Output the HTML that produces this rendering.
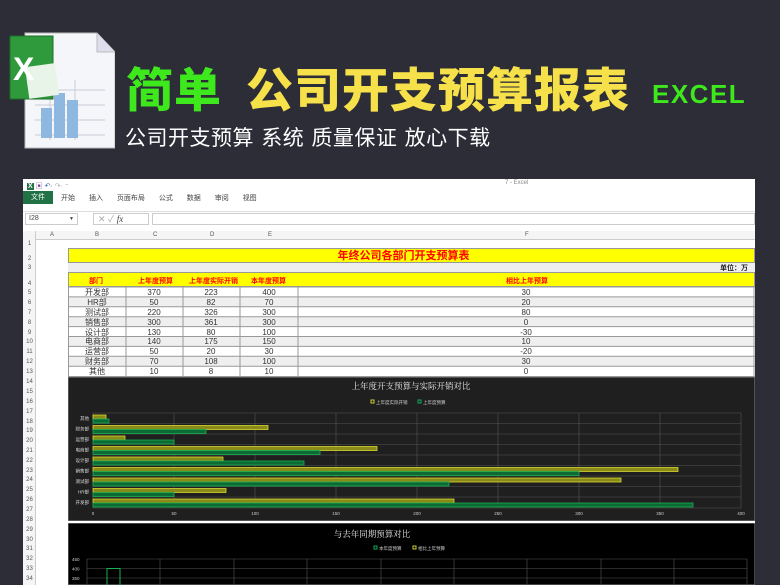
<!DOCTYPE html>
<html><head><meta charset="utf-8"><style>
*{margin:0;padding:0;box-sizing:border-box}
body{width:780px;height:585px;overflow:hidden;background:#2d2d38;font-family:"Liberation Sans","Noto Sans CJK SC",sans-serif;position:relative}
.a{position:absolute}
.t{font-family:"Noto Sans CJK SC","WenQuanYi Zen Hei",sans-serif;font-weight:900}
.rn{position:absolute;left:23px;width:13px;font-size:6px;color:#555;text-align:center}
</style></head><body>
<svg class="a" style="left:5px;top:30px" width="110" height="120" viewBox="0 0 110 120">
<path d="M20 3 H92 L110 22 V118 H20 Z" fill="#f4f6fa" stroke="#bbb"/>
<path d="M92 3 V22 H110" fill="#dde" stroke="#bbb"/>
<g stroke="#c8cdd6" stroke-width="1"><line x1="30" y1="60" x2="100" y2="60"/><line x1="30" y1="75" x2="100" y2="75"/><line x1="30" y1="90" x2="100" y2="90"/><line x1="30" y1="105" x2="100" y2="105"/><line x1="45" y1="50" x2="45" y2="110"/><line x1="70" y1="50" x2="70" y2="110"/></g>
<rect x="36" y="78" width="11" height="30" fill="#8fb8e0"/><rect x="49" y="63" width="11" height="45" fill="#8fb8e0"/><rect x="62" y="70" width="11" height="38" fill="#8fb8e0"/>
<rect x="5" y="6" width="43" height="63" fill="#2f9a3c" stroke="#1c6e28"/>
<rect x="22" y="35" width="30" height="32" fill="#e8f4e8" transform="rotate(-8 37 51)"/>
<text x="8" y="50" font-size="32" font-weight="bold" fill="#fff" font-family="Liberation Sans">X</text>
</svg>
<div class="a t" style="left:126px;top:57px;font-size:47px;color:#3de81c;line-height:60px;letter-spacing:1px">简单</div>
<div class="a t" style="left:246px;top:57px;font-size:47px;color:#f7e14a;line-height:60px;letter-spacing:1px">公司开支预算报表</div>
<div class="a" style="left:652px;top:79px;font-size:26px;font-weight:bold;color:#3de81c;line-height:30px;letter-spacing:1.5px">EXCEL</div>
<div class="a" style="left:125px;top:123px;font-size:21px;color:#fff;line-height:28px;font-family:'Noto Sans CJK SC',sans-serif;letter-spacing:0.5px;word-spacing:2px">公司开支预算 系统 质量保证 放心下载</div>

<div class="a" style="left:23px;top:179px;width:732px;height:406px;background:#fff"></div>
<div class="a" style="left:27px;top:181px;font-size:7px;color:#2f7a3a"><b style="background:#217346;color:#fff;padding:0 1px">X</b> <span style="color:#7a3ea0">▣</span> <span style="color:#2a5db0">↶</span>· <span style="color:#aaa">↷· ⁼</span></div>
<div class="a" style="left:505px;top:180px;font-size:6px;color:#888">7 - Excel</div>
<div class="a" style="left:23px;top:191px;width:30px;height:13px;background:#217346;color:#fff;font-size:7px;text-align:center;line-height:13px">文件</div>
<div class="a" style="left:61px;top:193px;font-size:7px;color:#444;word-spacing:12px">开始 插入 页面布局 公式 数据 审阅 视图</div>
<div class="a" style="left:23px;top:211px;width:732px;height:1px;background:#ddd"></div>
<div class="a" style="left:25px;top:213px;width:53px;height:12px;border:1px solid #ccc;font-size:7px;line-height:10px;padding-left:3px;color:#444">I28 <span style="float:right;margin-right:3px;font-size:5px">▼</span></div>
<div class="a" style="left:93px;top:213px;width:56px;height:12px;border:1px solid #ccc;font-size:9px;line-height:10px;color:#aaa;padding-left:4px">✕ ✓ <i style="color:#444;font-family:'Liberation Serif'">fx</i></div>
<div class="a" style="left:152px;top:213px;width:603px;height:12px;border:1px solid #ccc"></div>
<div class="a" style="left:23px;top:231px;width:732px;height:9px;background:#f5f5f5;border-bottom:1px solid #ccc"></div>
<div class="a" style="left:23px;top:231px;width:13px;height:354px;background:#f5f5f5;border-right:1px solid #ccc"></div>
<div class="a" style="top:232px;left:0;font-size:6px;color:#555;width:780px">
<span class="a" style="left:50px">A</span><span class="a" style="left:95px">B</span><span class="a" style="left:153px">C</span><span class="a" style="left:210px">D</span><span class="a" style="left:268px">E</span><span class="a" style="left:525px">F</span></div>
<div class="rn" style="top:241px">1</div><div class="rn" style="top:256px">2</div><div class="rn" style="top:265px">3</div><div class="rn" style="top:281px">4</div>
<div class="rn" style="top:290px">5</div><div class="rn" style="top:300px">6</div><div class="rn" style="top:310px">7</div><div class="rn" style="top:320px">8</div><div class="rn" style="top:330px">9</div><div class="rn" style="top:339px">10</div><div class="rn" style="top:349px">11</div><div class="rn" style="top:359px">12</div><div class="rn" style="top:369px">13</div>
<div class="rn" style="top:379px">14</div><div class="rn" style="top:389px">15</div><div class="rn" style="top:399px">16</div><div class="rn" style="top:409px">17</div><div class="rn" style="top:419px">18</div><div class="rn" style="top:428px">19</div><div class="rn" style="top:438px">20</div><div class="rn" style="top:448px">21</div><div class="rn" style="top:458px">22</div><div class="rn" style="top:468px">23</div><div class="rn" style="top:477px">24</div><div class="rn" style="top:487px">25</div><div class="rn" style="top:497px">26</div><div class="rn" style="top:507px">27</div><div class="rn" style="top:517px">28</div><div class="rn" style="top:527px">29</div><div class="rn" style="top:537px">30</div><div class="rn" style="top:546px">31</div><div class="rn" style="top:556px">32</div><div class="rn" style="top:566px">33</div><div class="rn" style="top:576px">34</div>

<div class="a" style="left:68px;top:248px;width:687px;height:15px;background:#ffff00;border:1px solid #999"></div>
<div class="a" style="left:60px;top:249px;width:687px;text-align:center;font-size:11px;font-weight:bold;color:#f00;font-family:'Noto Sans CJK SC',sans-serif;line-height:13px">年终公司各部门开支预算表</div>
<div class="a" style="left:68px;top:263px;width:687px;height:9px;background:#eee"></div>
<div class="a" style="left:720px;top:263px;font-size:7px;color:#222;font-weight:bold">单位：万</div>
<div class="a" style="left:68px;top:272px;width:687px;height:15px;background:#ffff00;border:1px solid #999"></div>
<div class="a" style="top:276px;left:0;font-size:7px;color:#f00;font-weight:bold">
<span class="a" style="left:89px;white-space:nowrap">部门</span><span class="a" style="left:138px;white-space:nowrap">上年度预算</span><span class="a" style="left:189px;white-space:nowrap">上年度实际开销</span><span class="a" style="left:251px;white-space:nowrap">本年度预算</span><span class="a" style="left:506px;white-space:nowrap">相比上年预算</span></div>
<svg class="a" style="left:68px;top:287px" width="687" height="91">
<g fill="#efefef"><rect y="10" width="687" height="9.9"/><rect y="29.7" width="687" height="9.9"/><rect y="49.4" width="687" height="9.9"/><rect y="69.1" width="687" height="9.9"/></g>
<g stroke="#999" stroke-width="1"><line x1="0" y1="0" x2="687" y2="0"/><line x1="0" y1="9.9" x2="687" y2="9.9"/><line x1="0" y1="19.8" x2="687" y2="19.8"/><line x1="0" y1="29.7" x2="687" y2="29.7"/><line x1="0" y1="39.6" x2="687" y2="39.6"/><line x1="0" y1="49.5" x2="687" y2="49.5"/><line x1="0" y1="59.4" x2="687" y2="59.4"/><line x1="0" y1="69.3" x2="687" y2="69.3"/><line x1="0" y1="79.2" x2="687" y2="79.2"/><line x1="0" y1="89.5" x2="687" y2="89.5"/>
<line x1="0.5" y1="-15" x2="0.5" y2="90"/><line x1="58" y1="-15" x2="58" y2="90"/><line x1="115" y1="-15" x2="115" y2="90"/><line x1="172" y1="-15" x2="172" y2="90"/><line x1="230" y1="-15" x2="230" y2="90"/><line x1="686" y1="-15" x2="686" y2="90"/></g>
<g font-size="8" fill="#333" text-anchor="middle" font-family="Liberation Sans,Noto Sans CJK SC,sans-serif">
<text x="29" y="8">开发部</text><text x="86" y="8">370</text><text x="143" y="8">223</text><text x="201" y="8">400</text><text x="458" y="8">30</text>
<text x="29" y="18">HR部</text><text x="86" y="18">50</text><text x="143" y="18">82</text><text x="201" y="18">70</text><text x="458" y="18">20</text>
<text x="29" y="28">测试部</text><text x="86" y="28">220</text><text x="143" y="28">326</text><text x="201" y="28">300</text><text x="458" y="28">80</text>
<text x="29" y="38">销售部</text><text x="86" y="38">300</text><text x="143" y="38">361</text><text x="201" y="38">300</text><text x="458" y="38">0</text>
<text x="29" y="48">设计部</text><text x="86" y="48">130</text><text x="143" y="48">80</text><text x="201" y="48">100</text><text x="458" y="48">-30</text>
<text x="29" y="57">电商部</text><text x="86" y="57">140</text><text x="143" y="57">175</text><text x="201" y="57">150</text><text x="458" y="57">10</text>
<text x="29" y="67">运营部</text><text x="86" y="67">50</text><text x="143" y="67">20</text><text x="201" y="67">30</text><text x="458" y="67">-20</text>
<text x="29" y="77">财务部</text><text x="86" y="77">70</text><text x="143" y="77">108</text><text x="201" y="77">100</text><text x="458" y="77">30</text>
<text x="29" y="87">其他</text><text x="86" y="87">10</text><text x="143" y="87">8</text><text x="201" y="87">10</text><text x="458" y="87">0</text>
</g></svg>

<svg class="a" style="left:68px;top:377px" width="687" height="144">
<rect width="687" height="144" fill="#1f1f1f" stroke="#888"/>
<text x="343" y="12" font-size="8.5" fill="#eee" text-anchor="middle" font-family="Noto Serif CJK SC,serif">上年度开支预算与实际开销对比</text>
<rect x="303" y="23" width="3" height="3" fill="none" stroke="#cc3"/><text x="308" y="27" font-size="4.5" fill="#ccc">上年度实际开销</text>
<rect x="350" y="23" width="3" height="3" fill="none" stroke="#1a5"/><text x="355" y="27" font-size="4.5" fill="#ccc">上年度预算</text>
<g stroke="#555" stroke-width="0.6">
<line x1="25" y1="36" x2="673" y2="36"/><line x1="25" y1="46.5" x2="673" y2="46.5"/><line x1="25" y1="57" x2="673" y2="57"/><line x1="25" y1="67.5" x2="673" y2="67.5"/><line x1="25" y1="78" x2="673" y2="78"/><line x1="25" y1="88.5" x2="673" y2="88.5"/><line x1="25" y1="99" x2="673" y2="99"/><line x1="25" y1="109.5" x2="673" y2="109.5"/><line x1="25" y1="120" x2="673" y2="120"/><line x1="25" y1="131" x2="673" y2="131"/>
<line x1="25" y1="36" x2="25" y2="131"/><line x1="106" y1="36" x2="106" y2="131"/><line x1="187" y1="36" x2="187" y2="131"/><line x1="268" y1="36" x2="268" y2="131"/><line x1="349" y1="36" x2="349" y2="131"/><line x1="430" y1="36" x2="430" y2="131"/><line x1="511" y1="36" x2="511" y2="131"/><line x1="592" y1="36" x2="592" y2="131"/><line x1="673" y1="36" x2="673" y2="131"/></g>
<g font-size="4.5" fill="#ddd" text-anchor="end">
<text x="21" y="43">其他</text><text x="21" y="53.5">财务部</text><text x="21" y="64">运营部</text><text x="21" y="74.5">电商部</text><text x="21" y="85">设计部</text><text x="21" y="95.5">销售部</text><text x="21" y="106">测试部</text><text x="21" y="116.5">HR部</text><text x="21" y="127">开发部</text></g>
<g fill="#8a8a1a" stroke="#d8d830" stroke-width="0.8">
<rect x="25" y="38" width="13" height="4"/><rect x="25" y="48.5" width="175" height="4"/><rect x="25" y="59" width="32" height="4"/><rect x="25" y="69.5" width="284" height="4"/><rect x="25" y="80" width="130" height="4"/><rect x="25" y="90.5" width="585" height="4"/><rect x="25" y="101" width="528" height="4"/><rect x="25" y="111.5" width="133" height="4"/><rect x="25" y="122" width="361" height="4"/></g>
<g fill="#0d6a35" stroke="#19b050" stroke-width="0.8">
<rect x="25" y="42" width="16" height="4"/><rect x="25" y="52.5" width="113" height="4"/><rect x="25" y="63" width="81" height="4"/><rect x="25" y="73.5" width="227" height="4"/><rect x="25" y="84" width="211" height="4"/><rect x="25" y="94.5" width="486" height="4"/><rect x="25" y="105" width="356" height="4"/><rect x="25" y="115.5" width="81" height="4"/><rect x="25" y="126" width="600" height="4"/></g>
<g font-size="4.5" fill="#ccc" text-anchor="middle">
<text x="25" y="138">0</text><text x="106" y="138">50</text><text x="187" y="138">100</text><text x="268" y="138">150</text><text x="349" y="138">200</text><text x="430" y="138">250</text><text x="511" y="138">300</text><text x="592" y="138">350</text><text x="673" y="138">400</text></g>
</svg>

<svg class="a" style="left:68px;top:523px" width="687" height="62">
<rect width="687" height="62" fill="#000" stroke="#888"/>
<text x="304" y="14" font-size="8.5" fill="#eee" text-anchor="middle" font-family="Noto Serif CJK SC,serif">与去年同期预算对比</text>
<rect x="306" y="23" width="3" height="3" fill="none" stroke="#1a5"/><text x="311" y="27" font-size="4.5" fill="#ccc">本年度预算</text>
<rect x="345" y="23" width="3" height="3" fill="none" stroke="#cc3"/><text x="350" y="27" font-size="4.5" fill="#ccc">相比上年预算</text>
<g stroke="#555" stroke-width="0.6">
<line x1="19" y1="36" x2="679" y2="36"/><line x1="19" y1="45.5" x2="679" y2="45.5"/><line x1="19" y1="55" x2="679" y2="55"/>
<line x1="19" y1="36" x2="19" y2="62"/><line x1="92" y1="36" x2="92" y2="62"/><line x1="166" y1="36" x2="166" y2="62"/><line x1="239" y1="36" x2="239" y2="62"/><line x1="313" y1="36" x2="313" y2="62"/><line x1="386" y1="36" x2="386" y2="62"/><line x1="459" y1="36" x2="459" y2="62"/><line x1="533" y1="36" x2="533" y2="62"/><line x1="606" y1="36" x2="606" y2="62"/><line x1="679" y1="36" x2="679" y2="62"/></g>
<g font-size="4.5" fill="#ccc"><text x="4" y="38">450</text><text x="4" y="47.5">400</text><text x="4" y="57">350</text></g>
<rect x="39" y="45.5" width="13" height="20" fill="none" stroke="#19b050" stroke-width="1"/>
</svg>
</body></html>
